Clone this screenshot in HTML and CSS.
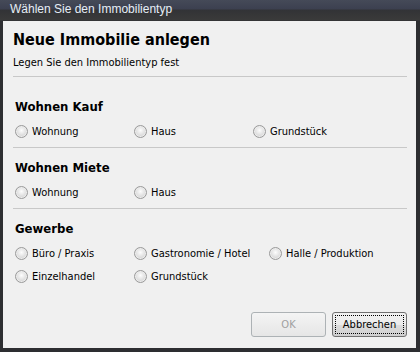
FILE: index.html
```html
<!DOCTYPE html>
<html lang="de">
<head>
    <meta charset="UTF-8">
    <title>Wählen Sie den Immobilientyp</title>
    <link rel="stylesheet" href="styles.css">
</head>
<body>
<div class="window">
    <div class="titlebar">Wählen Sie den Immobilientyp</div>
    <div class="content">
        <div class="header">
            <h1 class="heading">Neue Immobilie anlegen</h1>
            <p class="subtitle">Legen Sie den Immobilientyp fest</p>
        </div>

        <div class="section section-first">
            <h2 class="section-title">Wohnen Kauf</h2>
            <div class="options">
                <label class="option"><span class="radio"></span>Wohnung</label>
                <label class="option"><span class="radio"></span>Haus</label>
                <label class="option"><span class="radio"></span>Grundstück</label>
            </div>
        </div>

        <div class="section">
            <h2 class="section-title">Wohnen Miete</h2>
            <div class="options">
                <label class="option"><span class="radio"></span>Wohnung</label>
                <label class="option"><span class="radio"></span>Haus</label>
            </div>
        </div>

        <div class="section section-last">
            <h2 class="section-title">Gewerbe</h2>
            <div class="options options-wide">
                <label class="option"><span class="radio"></span>Büro / Praxis</label>
                <label class="option"><span class="radio"></span>Gastronomie / Hotel</label>
                <label class="option"><span class="radio"></span>Halle / Produktion</label>
                <label class="option"><span class="radio"></span>Einzelhandel</label>
                <label class="option"><span class="radio"></span>Grundstück</label>
            </div>
        </div>

        <div class="buttons">
            <button type="button" class="dialog-button" disabled>OK</button>
            <button type="button" class="dialog-button dialog-button-focus"><span class="focus-ring">Abbrechen</span></button>
        </div>
    </div>
</div>
</body>
</html>
```

FILE: styles.css
```css
body {
    margin: 0;
    padding: 0;
    font-family: "DejaVu Sans Condensed", "Liberation Sans", sans-serif;
    font-size: 11px;
    color: #000;
}

.window {
    width: 420px;
    height: 352px;
    display: flex;
    flex-direction: column;
    background-color: #2d2e31;
    box-sizing: border-box;
}

.titlebar {
    height: 21px;
    line-height: 19px;
    padding-left: 10px;
    font-family: "Liberation Sans", sans-serif;
    font-size: 12px;
    color: #e6eef6;
    background: linear-gradient(#454a58 0px, #3c4050 9px, #323336 10px, #3a3a3a 20px, #2d2e31 21px);
}

.content {
    flex: 1;
    margin: 0 4px 4px 3px;
    padding: 0 9px 0 10px;
    background-color: #f0f0f0;
    display: flex;
    flex-direction: column;
}

.header {
    padding-top: 9px;
    padding-bottom: 6px;
    border-bottom: 1px solid #c8c8c8;
}

.heading {
    margin: 0;
    font-size: 16px;
    line-height: 20px;
    font-weight: bold;
}

.subtitle {
    margin: 6px 0 0;
    line-height: 14px;
}

.section {
    padding: 12px 0 6px 2px;
    border-bottom: 1px solid #c8c8c8;
}

.section-first {
    padding-top: 22px;
}

.section-last {
    border-bottom: none;
}

.section-title {
    margin: 0 0 6px;
    font-size: 13px;
    line-height: 16px;
    font-weight: bold;
}

.options {
    display: grid;
    grid-template-columns: 119px 119px 1fr;
    row-gap: 3px;
}

.options-wide {
    grid-template-columns: 119px 135px 1fr;
}

.option {
    display: flex;
    align-items: center;
    gap: 4px;
    height: 20px;
}

.radio {
    width: 11px;
    height: 11px;
    border: 1px solid #9a9a9a;
    border-radius: 50%;
    background: radial-gradient(circle at 50% 40%, #fdfdfd 0, #e4e4e4 45%, #c6c6c6 100%);
    box-shadow: inset 0 0 0 1px #ececec;
}

.buttons {
    margin-top: auto;
    margin-bottom: 11px;
    display: flex;
    justify-content: flex-end;
    gap: 6px;
}

.dialog-button {
    width: 75px;
    height: 25px;
    padding: 2px;
    border: 1px solid #707070;
    border-radius: 3px;
    font-family: inherit;
    font-size: 11px;
    color: #000;
    background: linear-gradient(#f2f2f2 0, #ebebeb 50%, #dddddd 51%, #cfcfcf 100%);
}

.dialog-button:disabled {
    color: #a0a0a0;
    border-color: #adb2b5;
    background: linear-gradient(#f4f4f4, #e6e6e6);
}

.focus-ring {
    display: flex;
    align-items: center;
    justify-content: center;
    height: 100%;
    border: 1px dotted #000;
    box-sizing: border-box;
}
```
